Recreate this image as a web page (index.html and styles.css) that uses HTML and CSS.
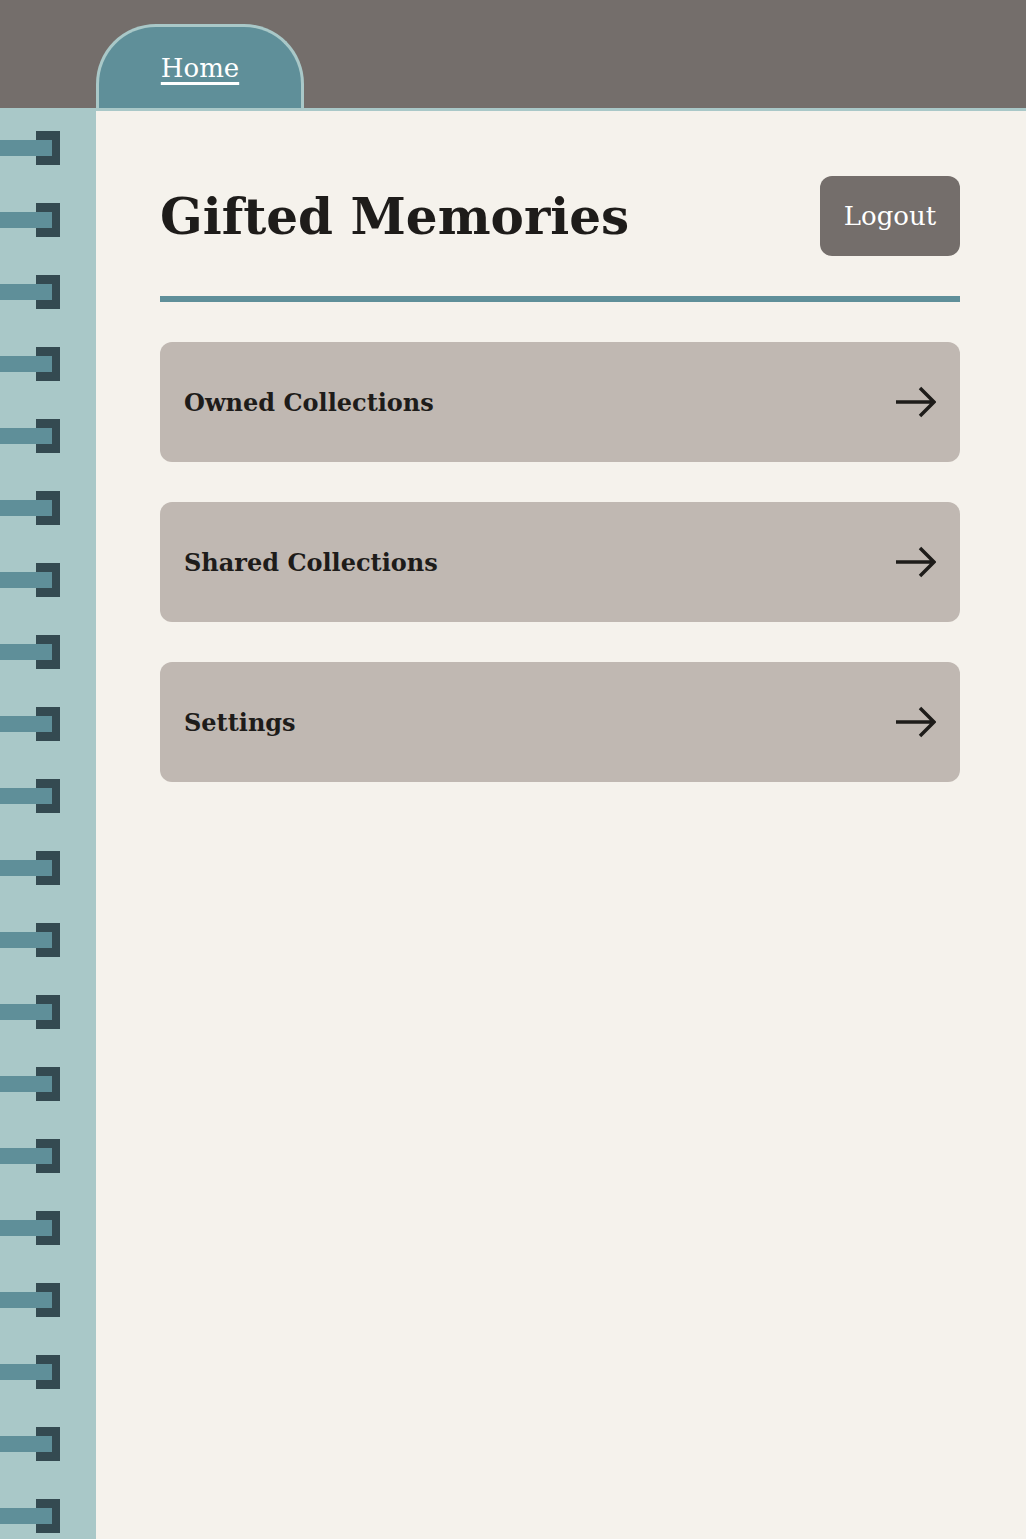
FILE: index.html
```html
<!DOCTYPE html>
<html lang="en">
<head>
    <meta charset="UTF-8">
    <meta name="viewport" content="width=device-width, initial-scale=1.0">
    <title>Gifted Memories</title>
    <link rel="stylesheet" href="styles.css">
</head>
<body>

    <!-- Top Bar -->
    <header class="top-bar">
        <a class="tab" href="#">Home</a>
    </header>

    <div class="notebook">
        <!-- Spiral Binding -->
        <aside class="binding">
            <span class="ring"></span><span class="ring"></span><span class="ring"></span><span class="ring"></span>
            <span class="ring"></span><span class="ring"></span><span class="ring"></span><span class="ring"></span>
            <span class="ring"></span><span class="ring"></span><span class="ring"></span><span class="ring"></span>
            <span class="ring"></span><span class="ring"></span><span class="ring"></span><span class="ring"></span>
            <span class="ring"></span><span class="ring"></span><span class="ring"></span><span class="ring"></span>
        </aside>

        <!-- Page Content -->
        <main class="page">
            <div class="page-header">
                <h1>Gifted Memories</h1>
                <button class="logout-button">Logout</button>
            </div>

            <nav class="menu">
                <a class="menu-item" href="#">
                    <span>Owned Collections</span>
                    <svg class="arrow" viewBox="0 0 40 40"><path d="M0 20 H37 M24 6 L38 20 L24 34"/></svg>
                </a>
                <a class="menu-item" href="#">
                    <span>Shared Collections</span>
                    <svg class="arrow" viewBox="0 0 40 40"><path d="M0 20 H37 M24 6 L38 20 L24 34"/></svg>
                </a>
                <a class="menu-item" href="#">
                    <span>Settings</span>
                    <svg class="arrow" viewBox="0 0 40 40"><path d="M0 20 H37 M24 6 L38 20 L24 34"/></svg>
                </a>
            </nav>
        </main>
    </div>

</body>
</html>
```

FILE: styles.css
```css
body {
    font-family: "DejaVu Serif", serif;
    background-color: #f5f2ec;
    color: #1e1c1a;
    margin: 0;
    padding: 0;
    min-height: 100vh;
    display: flex;
    flex-direction: column;
}

.top-bar {
    background-color: #746e6b;
    height: 108px;
    border-bottom: 3px solid #a9c8c8;
    padding-left: 96px;
    display: flex;
    align-items: flex-end;
}

.tab {
    width: 208px;
    height: 84px;
    box-sizing: border-box;
    background-color: #5f8f99;
    border: 3px solid #a9c8c8;
    border-bottom: none;
    border-radius: 60px 60px 0 0;
    color: white;
    font-size: 26px;
    text-align: center;
    padding-top: 26px;
    text-decoration: underline;
    text-decoration-thickness: 3px;
    text-underline-offset: 5px;
}

.notebook {
    flex: 1;
    display: flex;
}

.binding {
    width: 96px;
    background-color: #a9c8c8;
    padding-top: 20px;
    display: flex;
    flex-direction: column;
    gap: 38px;
    overflow: hidden;
    flex-shrink: 0;
}

.ring {
    display: block;
    width: 60px;
    height: 34px;
    flex-shrink: 0;
    background:
        linear-gradient(#5f8f99, #5f8f99) 0 9px / 52px 16px no-repeat,
        linear-gradient(#344a51, #344a51) 36px 0 / 24px 34px no-repeat;
}

.page {
    flex: 1;
    padding: 65px 66px 64px 64px;
}

.page-header {
    display: flex;
    justify-content: space-between;
    align-items: center;
    padding-bottom: 40px;
    border-bottom: 6px solid #5f8f99;
}

h1 {
    font-size: 50px;
    margin: 0;
}

.logout-button {
    width: 140px;
    height: 80px;
    background-color: #746e6b;
    color: white;
    border: none;
    border-radius: 12px;
    font-family: inherit;
    font-size: 26px;
    cursor: pointer;
}

.logout-button:hover {
    opacity: 0.8;
}

.menu {
    display: flex;
    flex-direction: column;
    gap: 40px;
    margin-top: 40px;
}

.menu-item {
    height: 120px;
    background-color: #c0b8b2;
    border-radius: 12px;
    padding: 0 24px;
    display: flex;
    align-items: center;
    justify-content: space-between;
    color: #1e1c1a;
    text-decoration: none;
    font-size: 24px;
    font-weight: bold;
}

.arrow {
    width: 40px;
    height: 40px;
    fill: none;
    stroke: #1e1c1a;
    stroke-width: 3.5;
}
```
